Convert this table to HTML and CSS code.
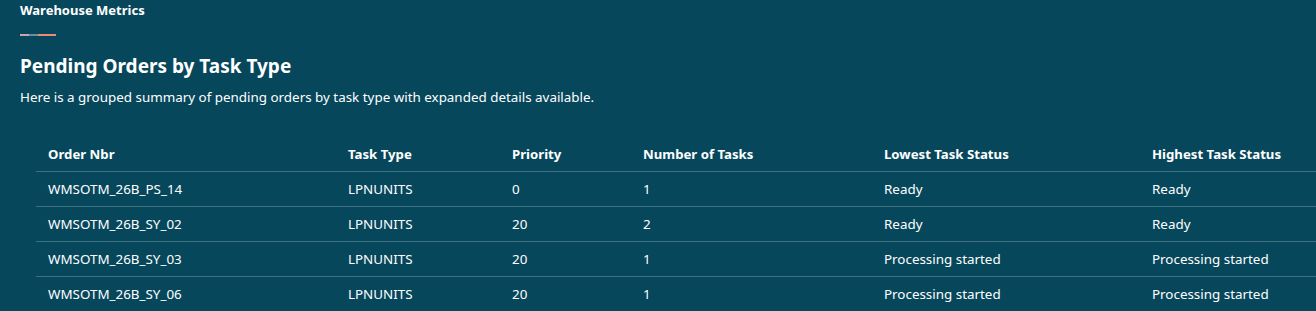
FILE: index.html
```html
<!DOCTYPE html>
<html lang="en">
<head>
<meta charset="utf-8">
<title>Warehouse Metrics</title>
<link rel="stylesheet" href="styles.css">
</head>
<body>
<div class="page">
  <div class="kicker">Warehouse Metrics</div>
  <div class="accent"><span class="seg seg1"></span><span class="seg seg2"></span><span class="seg seg3"></span></div>
  <h1 class="title">Pending Orders by Task Type</h1>
  <p class="desc">Here is a grouped summary of pending orders by task type with expanded details available.</p>
  <table class="grid">
    <colgroup>
      <col class="c1"><col class="c2"><col class="c3"><col class="c4"><col class="c5"><col class="c6">
    </colgroup>
    <thead>
      <tr><th>Order Nbr</th><th>Task Type</th><th>Priority</th><th>Number of Tasks</th><th>Lowest Task Status</th><th>Highest Task Status</th></tr>
    </thead>
    <tbody>
      <tr><td>WMSOTM_26B_PS_14</td><td>LPNUNITS</td><td>0</td><td>1</td><td>Ready</td><td>Ready</td></tr>
      <tr><td>WMSOTM_26B_SY_02</td><td>LPNUNITS</td><td>20</td><td>2</td><td>Ready</td><td>Ready</td></tr>
      <tr><td>WMSOTM_26B_SY_03</td><td>LPNUNITS</td><td>20</td><td>1</td><td>Processing started</td><td>Processing started</td></tr>
      <tr><td>WMSOTM_26B_SY_06</td><td>LPNUNITS</td><td>20</td><td>1</td><td>Processing started</td><td>Processing started</td></tr>
    </tbody>
  </table>
</div>
</body>
</html>
```
FILE: styles.css
```css
html, body {
  margin: 0;
  padding: 0;
  background: #07475c;
  color: #ffffff;
  font-family: "Noto Sans", "Open Sans", sans-serif;
  overflow: hidden;
}
.page {
  padding: 2px 0 0 20px;
}
.kicker {
  font-size: 13px;
  font-weight: 700;
  line-height: 16px;
}
.accent {
  display: flex;
  margin-top: 16px;
  height: 2px;
  width: 36px;
}
.seg { display: block; height: 2px; }
.seg1 { width: 9px; background: #c9a3b4; }
.seg2 { width: 9px; background: #6d8d9a; }
.seg3 { width: 18px; background: #f08a78; }
.title {
  margin: 18px 0 0;
  font-size: 19px;
  font-weight: 700;
  line-height: 25px;
}
.desc {
  margin: 9px 0 0;
  font-size: 13.4px;
  line-height: 18px;
}
.grid {
  margin: 31px 0 0 16px;
  width: 1280px;
  border-collapse: collapse;
  table-layout: fixed;
  font-size: 13.4px;
}
.c1 { width: 300px; }
.c2 { width: 164px; }
.c3 { width: 131px; }
.c4 { width: 241px; }
.c5 { width: 268px; }
.c6 { width: 176px; }
.grid th, .grid td {
  text-align: left;
  padding: 0 12px;
  height: 34px;
  white-space: nowrap;
}
.grid th {
  font-weight: 700;
  font-size: 13.2px;
  border-bottom: 1px solid #3e7283;
}
.grid td {
  font-weight: 400;
  border-bottom: 1px solid #3e7283;
}
```
